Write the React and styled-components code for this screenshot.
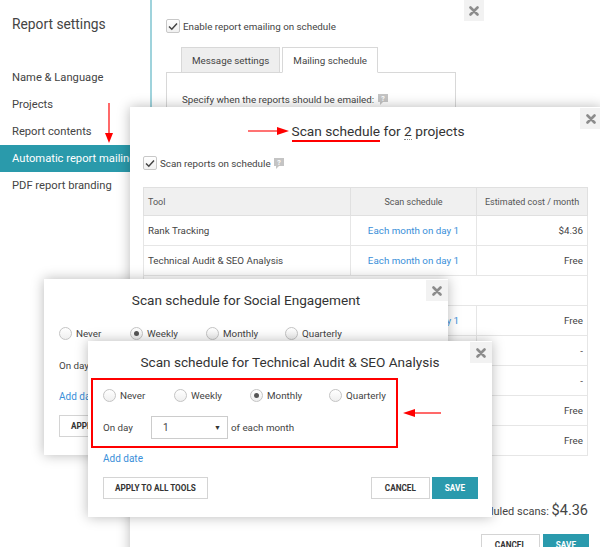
import React from "react";
import styled, { createGlobalStyle } from "styled-components";

const GlobalStyle = createGlobalStyle`
  html, body { margin: 0; padding: 0; background: #fff; }
  body { font-family: Roboto, "Liberation Sans", sans-serif; color: #444; }
  #root { width: 600px; height: 547px; overflow: hidden; position: relative; }
`;

const navItems = [
  "Name & Language",
  "Projects",
  "Report contents",
  "Automatic report mailing",
  "PDF report branding",
];

const rows = [
  { tool: "Rank Tracking", schedule: "Each month on day 1", cost: "$4.36" },
  { tool: "Technical Audit & SEO Analysis", schedule: "Each month on day 1", cost: "Free" },
  { group: "Content Marketing" },
  { tool: "Social Engagement", schedule: "Each month on day 1", cost: "Free" },
  { tool: "Backlink Monitoring", schedule: "Never", cost: "-" },
  { tool: "Link Building", schedule: "Never", cost: "-" },
  { tool: "Content Analysis", schedule: "Each month on day 1", cost: "Free" },
  { tool: "Site Audit", schedule: "Each month on day 1", cost: "Free" },
];

const options = ["Never", "Weekly", "Monthly", "Quarterly"];

function CloseIcon() {
  return (
    <svg width="10" height="10" viewBox="0 0 10 10">
      <path d="M1.5 1.5 L8.5 8.5 M8.5 1.5 L1.5 8.5" stroke="#8c8c8c" strokeWidth="2.6" strokeLinecap="round" />
    </svg>
  );
}

function HelpIcon() {
  return (
    <svg width="10" height="11" viewBox="0 0 10 11">
      <rect x="0" y="0" width="10" height="8" fill="#c4c4c4" />
      <path d="M2 8 L2 11 L5 8 Z" fill="#c4c4c4" />
      <text x="5" y="6.8" fontSize="7" fontWeight="700" fill="#fff" textAnchor="middle" fontFamily="Roboto, sans-serif">?</text>
    </svg>
  );
}

function Arrow({ dir, length }) {
  const vertical = dir === "down";
  const w = vertical ? 10 : length;
  const h = vertical ? length : 10;
  let line;
  let head;
  if (dir === "down") {
    line = `M5 0 L5 ${length - 8}`;
    head = `M1 ${length - 10} L9 ${length - 10} L5 ${length} Z`;
  } else if (dir === "right") {
    line = `M0 5 L${length - 8} 5`;
    head = `M${length - 12} 1 L${length} 5 L${length - 12} 9 Z`;
  } else {
    line = `M8 5 L${length} 5`;
    head = `M12 1 L0 5 L12 9 Z`;
  }
  return (
    <svg width={w} height={h} viewBox={`0 0 ${w} ${h}`}>
      <path d={line} stroke="#f44" strokeWidth="1.6" />
      <path d={head} fill="#f00" />
    </svg>
  );
}

function Checkbox() {
  return (
    <CheckBox>
      <svg width="10" height="9" viewBox="0 0 10 9">
        <path d="M1 4.5 L3.8 7.2 L9 1.4" stroke="#444" strokeWidth="1.5" fill="none" />
      </svg>
    </CheckBox>
  );
}

function ScheduleDialog({ title, selected, annotated, style }) {
  return (
    <ScheduleBox style={style}>
      <CloseButton>
        <CloseIcon />
      </CloseButton>
      <DialogTitle>{title}</DialogTitle>
      <ScheduleBody>
        <RadioRow>
          {options.map((o) => (
            <RadioOption key={o}>
              <RadioCircle $on={o === selected} />
              {o}
            </RadioOption>
          ))}
        </RadioRow>
        <DayRow>
          <DayLabel>On day</DayLabel>
          <Select>
            <span>1</span>
            <Caret>▼</Caret>
          </Select>
          <span>of each month</span>
        </DayRow>
        <AddDate>Add date</AddDate>
        <ButtonRow>
          <Button $wide>Apply to all tools</Button>
          <ButtonGroup>
            <Button>Cancel</Button>
            <Button $primary>Save</Button>
          </ButtonGroup>
        </ButtonRow>
      </ScheduleBody>
      {annotated && (
        <>
          <RedFrame />
          <SideArrow>
            <Arrow dir="left" length={38} />
          </SideArrow>
        </>
      )}
    </ScheduleBox>
  );
}

export default function App() {
  return (
    <>
      <GlobalStyle />
      <Page>
        <Sidebar>
          <SidebarTitle>Report settings</SidebarTitle>
          <Nav>
            {navItems.map((n, i) => (
              <NavItem key={n} $active={i === 3}>
                {n}
              </NavItem>
            ))}
          </Nav>
        </Sidebar>
        <SettingsPanel>
          <TopClose>
            <CloseIcon />
          </TopClose>
          <CheckRow>
            <Checkbox />
            Enable report emailing on schedule
          </CheckRow>
          <Tabs>
            <Tab>Message settings</Tab>
            <Tab $active>Mailing schedule</Tab>
          </Tabs>
          <TabPanel>
            Specify when the reports should be emailed: <HelpIcon />
          </TabPanel>
        </SettingsPanel>
      </Page>

      <NavArrow>
        <Arrow dir="down" length={40} />
      </NavArrow>

      <ProjectsDialog>
        <CloseButton>
          <CloseIcon />
        </CloseButton>
        <TitleArrow>
          <Arrow dir="right" length={41} />
        </TitleArrow>
        <BigTitle>
          <RedUnderline>Scan schedule</RedUnderline> for <Dotted>2</Dotted> projects
        </BigTitle>
        <ScanCheck>
          <Checkbox />
          Scan reports on schedule
          <HelpIcon />
        </ScanCheck>
        <Table>
          <thead>
            <tr>
              <Th>Tool</Th>
              <Th $align="center">Scan schedule</Th>
              <Th $align="center">Estimated cost / month</Th>
            </tr>
          </thead>
          <tbody>
            {rows.map((r, i) =>
              r.group ? (
                <tr key={i}>
                  <Td colSpan={3}>{r.group}</Td>
                </tr>
              ) : (
                <tr key={i}>
                  <Td>{r.tool}</Td>
                  <Td $align="center">
                    <Link>{r.schedule}</Link>
                  </Td>
                  <Td $align="right">{r.cost}</Td>
                </tr>
              )
            )}
          </tbody>
        </Table>
        <Total>
          Total cost of scheduled scans: <TotalValue>$4.36</TotalValue>
        </Total>
        <FooterButtons>
          <Button>Cancel</Button>
          <Button $primary>Save</Button>
        </FooterButtons>
      </ProjectsDialog>

      <ScheduleDialog
        title="Scan schedule for Social Engagement"
        selected="Weekly"
        style={{ left: 44, top: 279 }}
      />
      <ScheduleDialog
        title="Scan schedule for Technical Audit & SEO Analysis"
        selected="Monthly"
        annotated
        style={{ left: 88, top: 341 }}
      />
    </>
  );
}

const Page = styled.div`
  display: flex;
  height: 547px;
`;

const Sidebar = styled.div`
  width: 150px;
  border-right: 2px solid #9fd3dc;
  flex-shrink: 0;
`;

const SidebarTitle = styled.div`
  padding: 15px 12px 0;
  font-size: 13.8px;
  line-height: 18px;
  color: #444;
`;

const Nav = styled.div`
  margin-top: 31px;
`;

const NavItem = styled.div`
  height: 27px;
  line-height: 27px;
  padding-left: 12px;
  font-size: 11.2px;
  white-space: nowrap;
  overflow: hidden;
  color: ${(p) => (p.$active ? "#fff" : "#444")};
  background: ${(p) => (p.$active ? "#2a9aab" : "transparent")};
`;

const SettingsPanel = styled.div`
  position: relative;
  width: 318px;
  padding-left: 14px;
`;

const TopClose = styled.div`
  position: absolute;
  top: 0;
  right: 0;
  width: 20px;
  height: 21px;
  background: #f2f2f2;
  display: flex;
  align-items: center;
  justify-content: center;
`;

const CheckRow = styled.div`
  display: flex;
  align-items: center;
  gap: 3px;
  margin-top: 19px;
  height: 14px;
  font-size: 9.8px;
  color: #444;
`;

const CheckBox = styled.span`
  width: 12px;
  height: 12px;
  border: 1px solid #c8c8c8;
  border-radius: 2px;
  background: linear-gradient(#fff, #f1f1f1);
  display: inline-flex;
  align-items: center;
  justify-content: center;
  flex-shrink: 0;
`;

const Tabs = styled.div`
  display: flex;
  gap: 2px;
  margin: 14px 0 0 15px;
  position: relative;
  z-index: 1;
`;

const Tab = styled.div`
  height: 26px;
  line-height: 26px;
  padding: 0 10px;
  font-size: 9.8px;
  color: #444;
  border: 1px solid #d8d8d8;
  border-bottom-color: ${(p) => (p.$active ? "#fff" : "#d8d8d8")};
  background: ${(p) => (p.$active ? "#fff" : "#eee")};
  box-sizing: border-box;
`;

const TabPanel = styled.div`
  margin-top: -1px;
  width: 290px;
  height: 80px;
  box-sizing: border-box;
  border: 1px solid #d8d8d8;
  padding: 21px 15px 0;
  font-size: 9.8px;
  color: #444;
  display: flex;
  align-items: flex-start;
  gap: 4px;
  white-space: nowrap;
`;

const NavArrow = styled.div`
  position: absolute;
  left: 104px;
  top: 103px;
  line-height: 0;
`;

const Dialog = styled.div`
  position: absolute;
  background: #fff;
  box-shadow: 0 0 12px rgba(0, 0, 0, 0.28);
  box-sizing: border-box;
`;

const ProjectsDialog = styled(Dialog)`
  left: 130px;
  top: 107px;
  width: 472px;
  height: 460px;
  padding: 14px 13px 0 13px;
`;

const CloseButton = styled.div`
  position: absolute;
  top: 1px;
  right: 0;
  width: 22px;
  height: 21px;
  background: #f2f2f2;
  display: flex;
  align-items: center;
  justify-content: center;
`;

const TitleArrow = styled.div`
  position: absolute;
  left: 118px;
  top: 19px;
  line-height: 0;
`;

const BigTitle = styled.div`
  text-align: center;
  font-size: 13.7px;
  line-height: 20px;
  color: #333;
  padding-left: 24px;
`;

const RedUnderline = styled.span`
  border-bottom: 2px solid #f00;
  padding-bottom: 1px;
`;

const Dotted = styled.span`
  border-bottom: 1px dotted #888;
`;

const ScanCheck = styled(CheckRow)`
  margin-top: 15px;
  gap: 3px;
  font-size: 9.8px;
`;

const Table = styled.table`
  margin-top: 17px;
  width: 445px;
  border-collapse: collapse;
  font-size: 9.8px;
  table-layout: fixed;
`;

const Th = styled.th`
  height: 27px;
  padding: 0 4px;
  background: #f0f0f0;
  border: 1px solid #e0e0e0;
  font-weight: 400;
  font-size: 9px;
  color: #555;
  white-space: nowrap;
  text-align: ${(p) => p.$align || "left"};
  &:nth-child(1) { width: 198px; }
  &:nth-child(2) { width: 117px; }
`;

const Td = styled.td`
  height: 29px;
  padding: 0 4px;
  border: 1px solid #e6e6e6;
  color: #444;
  text-align: ${(p) => p.$align || "left"};
  white-space: nowrap;
`;

const Link = styled.span`
  color: #3a8fd9;
`;

const Total = styled.div`
  margin-top: 44px;
  text-align: right;
  font-size: 11px;
  line-height: 22px;
  padding-right: 1px;
`;

const TotalValue = styled.span`
  font-size: 14.5px;
`;

const FooterButtons = styled.div`
  margin-top: 11px;
  display: flex;
  justify-content: flex-end;
  gap: 3px;
`;

const Button = styled.button`
  height: 22px;
  padding: 0 ${(p) => (p.$primary ? "12px" : p.$wide ? "11px" : "13px")};
  font-family: Roboto, "Liberation Sans", sans-serif;
  font-size: 8.2px;
  font-weight: 700;
  text-transform: uppercase;
  color: ${(p) => (p.$primary ? "#fff" : "#333")};
  background: ${(p) => (p.$primary ? "#2a9aad" : "#fff")};
  border: 1px solid ${(p) => (p.$primary ? "#2a9aad" : "#d4d4d4")};
  border-radius: 0;
  cursor: pointer;
`;

const ScheduleBox = styled(Dialog)`
  width: 404px;
  height: 176px;
  padding-top: 12px;
`;

const DialogTitle = styled.div`
  text-align: center;
  font-size: 13.6px;
  line-height: 18px;
  color: #333;
`;

const ScheduleBody = styled.div`
  padding: 0 14px 0 15px;
  font-size: 9.8px;
  color: #444;
`;

const RadioRow = styled.div`
  display: grid;
  grid-template-columns: 71px 76px 79px auto;
  margin-top: 16px;
  height: 16px;
  align-items: center;
`;

const RadioOption = styled.label`
  display: flex;
  align-items: center;
  gap: 4px;
`;

const RadioCircle = styled.span`
  width: 11px;
  height: 11px;
  border: 1px solid #c4c4c4;
  border-radius: 50%;
  background: linear-gradient(#fff, #efefef);
  display: inline-flex;
  align-items: center;
  justify-content: center;
  &::after {
    content: "";
    width: 5px;
    height: 5px;
    border-radius: 50%;
    background: ${(p) => (p.$on ? "#555" : "transparent")};
  }
`;

const DayRow = styled.div`
  display: flex;
  align-items: center;
  margin-top: 13px;
  height: 23px;
`;

const DayLabel = styled.span`
  width: 48px;
`;

const Select = styled.div`
  width: 77px;
  height: 23px;
  box-sizing: border-box;
  border: 1px solid #ccc;
  display: flex;
  align-items: center;
  justify-content: space-between;
  padding: 0 6px 0 11px;
  margin-right: 3px;
  font-size: 10px;
`;

const Caret = styled.span`
  font-size: 7px;
  color: #333;
`;

const AddDate = styled.div`
  margin-top: 12px;
  line-height: 16px;
  color: #3a8fd9;
  font-size: 10px;
`;

const ButtonRow = styled.div`
  margin-top: 10px;
  display: flex;
  justify-content: space-between;
`;

const ButtonGroup = styled.div`
  display: flex;
  gap: 2px;
`;

const RedFrame = styled.div`
  position: absolute;
  left: 3px;
  top: 37px;
  width: 307px;
  height: 70px;
  box-sizing: border-box;
  border: 2px solid #f00;
  pointer-events: none;
`;

const SideArrow = styled.div`
  position: absolute;
  left: 315px;
  top: 67px;
  line-height: 0;
`;
